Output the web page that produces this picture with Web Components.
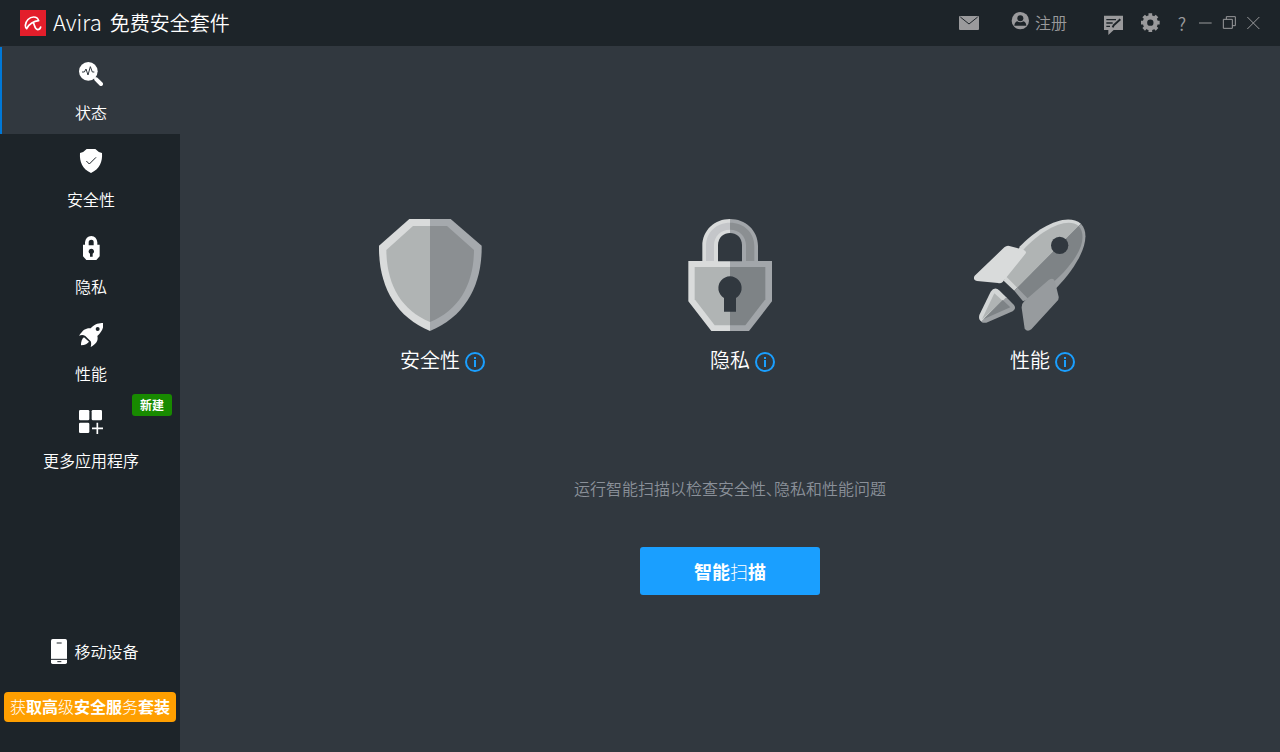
<!DOCTYPE html>
<html lang="zh-CN">
<head>
<meta charset="utf-8">
<title>Avira 免费安全套件</title>
<style>
html,body{margin:0;height:100%;background:#31383f}
body{font:350 16px/24px "Noto Sans CJK SC","Noto Sans",sans-serif;color:#fff}
b{font-weight:700}
i{font-weight:300;font-style:normal}
.tight{font-feature-settings:"palt"}
</style>
</head>
<body>
<suite-app>
  <title-bar slot="top"><span slot="brand">Avira</span>免费安全套件</title-bar>
  <side-nav slot="side">
    <nav-item icon="status" active>状态</nav-item>
    <nav-item icon="shield">安全性</nav-item>
    <nav-item icon="lock">隐私</nav-item>
    <nav-item icon="rocket" badge="新建">性能</nav-item>
    <nav-item icon="apps">更多应用程序</nav-item>
    <span slot="device">移动设备</span>
    <span slot="upgrade"><i>获</i><b>取高</b><i>级</i><b>安全服</b><i>务</i><b>套装</b></span>
  </side-nav>
  <status-view>
    <feature-card icon="bigShield">安全性</feature-card>
    <feature-card icon="bigLock">隐私</feature-card>
    <feature-card icon="bigRocket">性能</feature-card>
    <span slot="hint">运行智能扫描以检查安全性<span class="tight">、</span>隐私和性能问题</span>
    <span slot="action"><b>智能</b><i>扫</i><b>描</b></span>
  </status-view>
</suite-app>
<script>
// name: [viewBox, markup]
const ICONS = {
  logo: ['60 30 78 78', '<path fill="#e31e2b" d="M60 30h78v78H60z"/><path fill="none" stroke="#fff" stroke-width="5" stroke-linecap="round" stroke-linejoin="round" d="M80 86C77 84 76 80 76 76C77 63 88 51 101 51C109 51 114 55 116 62C103 63 86 71 80 86M100 68C104 75 104 88 113 89Q120 89 122 81"/>'],
  status: ['237 186 72 72', '<circle cx="265" cy="214" r="28" fill="#fff"/><path stroke="#fff" stroke-width="12" stroke-linecap="round" d="M289 238l14 14"/><path stroke="#fff" stroke-width="6" d="M281 230l8 8"/><path fill="none" stroke="#31383f" stroke-width="3" d="M246 216h7l5-9 6 18 7-25 6 16h6"/>'],
  shield: ['237 27 72 72', '<path fill="#fff" d="M260 27h26q10 11 20 12C308 65 299 87 273 99C247 87 238 65 240 39q10-1 20-12z"/><path fill="none" stroke="#1d2429" stroke-width="3" d="M259 63l9 9 20-20"/>'],
  lock: ['237 288 72 72', '<path fill="#fff" d="M255 314v-7q2-18 19-19q16 1 18 19v7h7v35l-10 11h-30l-10-11v-35z"/><path fill="#1d2429" d="M266 316v-9q0-8 8-8t7 8v9zM274 326a8 8 0 0 1 4 15v9h-8v-9a8 8 0 0 1 4-15z"/>'],
  rocket: ['237 39 72 72', '<path fill="#fff" fill-rule="evenodd" d="M310 39C300 39 285 40 272 55C257 54 250 59 237 77Q248 73 256 78L272 94Q275 100 272 111C286 103 296 93 292 78C306 66 312 50 310 39zM299 57a6 6 0 1 1-12 0a6 6 0 0 1 12 0z"/><path fill="#fff" d="M252 82Q243 88 243 106Q261 104 267 95z"/>'],
  apps: ['237 300 72 72', '<g fill="#fff"><rect x="237" y="300" width="31" height="31" rx="4"/><rect x="275" y="300" width="31" height="31" rx="4"/><rect x="237" y="338" width="31" height="31" rx="4"/></g><path stroke="#fff" stroke-width="5" d="M276 355h33M292 338v34"/>'],
  phone: ['153 57 48 75', '<rect x="153" y="57" width="48" height="75" rx="5" fill="#fff"/><path stroke="#1d2429" stroke-width="3" d="M170 69h15M153 118h48M172 125h12"/>'],
  mail: ['51 33 72 72', '<rect x="57" y="48" width="60" height="42" rx="3" fill="#9a9a9c"/><path fill="none" stroke="#1d2429" stroke-width="3" d="M61 51l26 21 26-21"/>'],
  user: ['204 33 72 72', '<circle cx="241" cy="65" r="26" fill="#9a9a9c"/><path fill="#1d2429" d="M223 80q1-12 11-14h14q10 2 11 14z"/><circle cx="241" cy="58" r="12" fill="#9a9a9c"/><circle cx="241" cy="58" r="9" fill="#1d2429"/>'],
  chat: ['486 33 72 72', '<path fill="#9a9a9c" d="M492 47h57v43h-28l-16 15v-15h-13z"/><path stroke="#1d2429" stroke-width="4" fill="none" d="M499 59h29M499 69h19M499 79h11"/><path stroke="#1d2429" stroke-width="6" fill="none" d="M518 82l3-6 20-18"/>'],
  gear: ['594 33 72 72', '<g fill="none" stroke="#9a9a9c"><circle cx="631" cy="68" r="16" stroke-width="13"/><path stroke-width="11" d="M631 40v10M631 86v10M603 68h10M649 68h10M611 48l7 7M644 81l7 7M611 88l7-7M644 55l7-7"/></g>'],
  min: ['762 33 72 72', '<path stroke="#9a9a9c" stroke-width="3" d="M777 69h38"/>'],
  restore: ['834 33 72 72', '<path fill="none" stroke="#9a9a9c" stroke-width="3" d="M850 58h27v27h-27zM859 58v-8h27v27h-9"/>'],
  close: ['906 33 72 72', '<path stroke="#9a9a9c" stroke-width="3" d="M922 51l36 36M958 51l-36 36"/>'],
  info: ['0 0 20 20', '<circle cx="10" cy="10" r="9" fill="none" stroke="#1a9fff" stroke-width="2"/><path stroke="#1a9fff" stroke-width="2" d="M10 8v7M10 5v2"/>'],
  bigShield: ['42 57 336 336', '<path fill="#d9dbdb" d="M210 57h-62L57 137C55 255 105 350 210 393z"/><path fill="#a5a9ad" d="M210 57h62l93 80C367 255 315 350 210 393z"/><path fill="#b0b4b4" d="M210 78h-51l-80 72C80 252 122 330 210 366z"/><path fill="#8b8f92" d="M210 78h51l81 72C341 252 298 330 210 366z"/>'],
  bigLock: ['42 57 336 336', '<path fill="#d9dbdb" d="M210 57C165 57 127 90 127 138v45H85v121l69 89h56z"/><path fill="#a2a6aa" d="M210 57c45 0 84 33 84 81v45h42v121l-69 89h-57z"/><path fill="#c4c6c9" d="M210 68c-42 0-72 30-72 70v45h24v-47c0-27 20-47 48-47z"/><path fill="#8b8f92" d="M210 68c42 0 73 30 73 70v45h-25v-47c0-27-20-47-48-47z"/><path fill="#31383f" d="M174 184v-48c0-49 72-49 72 0v48z"/><path fill="#b0b4b4" d="M210 201H104v97l60 78h46z"/><path fill="#7e8386" d="M210 201h106v97l-60 78h-46z"/><path fill="#31383f" d="M192 335v-41a35 35 0 1 1 36 0v41z"/>'],
  bigRocket: ['42 57 336 336', '<path fill="#d3d6d6" d="M363 71C320 35 235 80 180 139L131 242l32 30z"/><path fill="#9b9fa2" d="M363 71C400 113 355 195 290 263L189 304l-26-32z"/><path fill="#b0b4b4" d="M356 78C320 48 245 90 192 147L137 228l35 35z"/><path fill="#7e8386" d="M356 78C390 118 345 190 278 248L207 299l-35-36z"/><path fill="#d9dbdb" d="M133 142q7-6 15-4l42 11q13 5 5 14l-67 83q-6 5-14 3l-63-6q-14-3-7-16z"/><path fill="#979b9e" d="M266 240q15-10 19 5l11 45q1 8-5 14l-77 84q-12 9-20-2l-9-62q-1-13 9-22z"/><circle cx="299" cy="136" r="26" fill="#31383f"/><path fill="#d3d6d6" d="M92 275q12-17 27-3l22 22-76 71q-11-6-7-20z"/><path fill="#9b9fa2" d="M139 292l23 23q8 10-4 19l-79 34q-8 2-16-3z"/><path fill="#b0b4b4" d="M103 280l25 22-62 56z"/><path fill="#7e8386" d="M128 300l23 22-81 36z"/>']
};

const base = `:host{box-sizing:border-box}button,a{font:inherit;color:inherit;border:0;background:none;padding:0;margin:0;text-decoration:none;cursor:pointer}`;

function define(name, css, html) {
  customElements.define(name, class extends HTMLElement {
    constructor() {
      super();
      const body = typeof html === 'function' ? html(this) : html;
      this.attachShadow({mode: 'open'}).innerHTML = `<style>${base}${css}</style>${body}`;
    }
  });
}

define('ui-icon', `:host{display:block;flex:none;width:24px;height:24px}svg{display:block;width:100%;height:100%}`,
  el => { const [box, art] = ICONS[el.getAttribute('name')]; return `<svg viewBox="${box}" aria-hidden="true">${art}</svg>`; });

define('suite-app', `:host{display:grid;min-height:100vh;grid-template:46px 1fr / 180px minmax(0,1fr)}
  header{grid-column:1/-1;display:grid}aside,main{display:grid}`,
  `<header><slot name="top"></slot></header><aside><slot name="side"></slot></aside><main><slot></slot></main>`);

define('title-bar', `:host{display:flex;align-items:center;background:#1d2429;padding:0 14px 0 20px;color:#9a9a9c}
  .logo{width:26px;height:26px}
  h1{display:flex;align-items:baseline;gap:8px;margin:0 auto 0 7px;padding-bottom:2px;font-size:20px;line-height:28px;font-weight:350;color:#fff}
  .brand{font-size:22px;font-weight:300}
  button{display:flex;align-items:center;justify-content:center;min-width:24px;height:24px}
  .user{gap:3px;margin:0 35px 0 27px;padding-bottom:2px}.gear{margin:0 8px 0 12px}.help{font-size:18px}`,
  `<ui-icon class="logo" name="logo"></ui-icon><h1><span class="brand"><slot name="brand"></slot></span><span><slot></slot></span></h1>
  <button aria-label="消息"><ui-icon name="mail"></ui-icon></button>
  <button class="user"><ui-icon name="user"></ui-icon>注册</button>
  <button aria-label="反馈"><ui-icon name="chat"></ui-icon></button>
  <button class="gear" aria-label="设置"><ui-icon name="gear"></ui-icon></button>
  <button class="help">?</button>
  <button aria-label="最小化"><ui-icon name="min"></ui-icon></button>
  <button aria-label="还原"><ui-icon name="restore"></ui-icon></button>
  <button aria-label="关闭"><ui-icon name="close"></ui-icon></button>`);

define('side-nav', `:host{display:flex;flex-direction:column;background:#1d2429;padding-bottom:30px}
  nav{border-top:1px solid #31383f}
  .device{margin:auto 0 28px 10px;display:flex;justify-content:center;align-items:center;gap:7px}
  .device span{padding-bottom:1px}
  .device ui-icon{width:16px;height:25px}
  .upgrade{margin:0 4px;height:30px;padding-bottom:2px;border-radius:4px;background:#ff9f00;white-space:nowrap}`,
  `<nav><slot></slot></nav><a class="device" href="#"><ui-icon name="phone"></ui-icon><span><slot name="device"></slot></span></a>
  <button class="upgrade"><slot name="upgrade"></slot></button>`);

define('nav-item', `:host{display:block;position:relative}
  a{display:flex;flex-direction:column;align-items:center;gap:14px;height:72px;padding-top:15px;border-left:2px solid transparent}
  :host([active]) a{background:#31383f;border-color:#0078d7}
  .badge{position:absolute;right:8px;bottom:-21px;width:40px;border-radius:3px;background:#188a00;font-size:12px;line-height:22px;font-weight:700;text-align:center;z-index:1}`,
  el => `<a href="#"><ui-icon name="${el.getAttribute('icon')}"></ui-icon><span><slot></slot></span></a>${el.hasAttribute('badge') ? `<span class="badge">${el.getAttribute('badge')}</span>` : ''}`);

define('status-view', `:host{display:flex;flex-direction:column;align-items:center;justify-content:center;padding-top:16px}
  .cards{display:grid;grid-template-columns:repeat(3,minmax(0,300px));justify-content:center;width:100%}
  p{margin:102px 0 47px;color:#8a9099}
  button{width:180px;height:48px;border-radius:3px;background:#1a9fff;color:#fff;font-size:18px}`,
  `<div class="cards"><slot></slot></div><p><slot name="hint"></slot></p><button><slot name="action"></slot></button>`);

define('feature-card', `:host{display:flex;flex-direction:column;align-items:center;gap:15px}
  .art{width:112px;height:112px}
  .label{display:grid;grid-template-columns:1fr auto 1fr;column-gap:5px;align-items:center;width:100%;font-size:20px;line-height:28px}
  .name{grid-column:2}.info{width:20px;padding-top:4px}.info ui-icon{width:20px;height:20px}`,
  el => `<ui-icon class="art" name="${el.getAttribute('icon')}"></ui-icon><div class="label"><span class="name"><slot></slot></span><button class="info" aria-label="详情"><ui-icon name="info"></ui-icon></button></div>`);
</script>
</body>
</html>
